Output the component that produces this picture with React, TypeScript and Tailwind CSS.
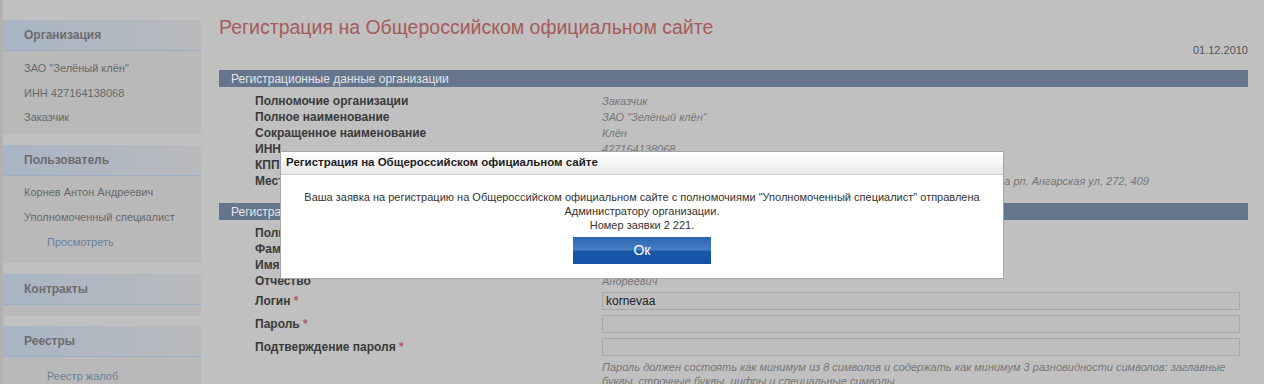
import React from 'react'

const orgRows = [
  { label: 'Полномочие организации', value: 'Заказчик' },
  { label: 'Полное наименование', value: 'ЗАО "Зелёный клён"' },
  { label: 'Сокращенное наименование', value: 'Клён' },
  { label: 'ИНН', value: '427164138068' },
  { label: 'КПП', value: '427101001' },
  {
    label: 'Место нахождения',
    value: '665830, Российская Федерация, Иркутская обл, Ангарский район, Михайловка рп, Ангарская ул, 272, 409',
  },
]

const userRows = [
  { label: 'Полномочия пользователя', value: 'Уполномоченный специалист' },
  { label: 'Фамилия', value: 'Корнев' },
  { label: 'Имя', value: 'Антон' },
  { label: 'Отчество', value: 'Андреевич' },
]

function SideHeader({ title }: { title: string }) {
  return (
    <div className="h-[31px] pl-[21px] flex items-center border-b border-[#9cafc6] bg-[linear-gradient(to_right,#a8b5c5,#b9babc)] text-[12px] font-bold text-[#6c6c6c]">
      {title}
    </div>
  )
}

function Sidebar() {
  return (
    <div className="w-[198px] shrink-0 pt-[20px] text-[11px] text-[#686868]">
      <SideHeader title="Организация" />
      <div className="bg-[#b9b9b9] pl-[21px] pt-[5px] pb-[4px] leading-[24.5px]">
        <div>ЗАО "Зелёный клён"</div>
        <div>ИНН 427164138068</div>
        <div>Заказчик</div>
      </div>

      <div className="h-[11px]" />
      <SideHeader title="Пользователь" />
      <div className="bg-[#b9b9b9] pl-[21px] pt-[4px] pb-[8px] leading-[25px]">
        <div>Корнев Антон Андреевич</div>
        <div>Уполномоченный специалист</div>
        <div className="pl-[23px] text-[#6a7e9e]">Просмотреть</div>
      </div>

      <div className="h-[11px]" />
      <SideHeader title="Контракты" />
      <div className="bg-[#b9b9b9] h-[11px]" />

      <div className="h-[10px]" />
      <SideHeader title="Реестры" />
      <div className="bg-[#b9b9b9] pl-[44px] pt-[7px] pb-[20px] leading-[24px] text-[#6a7e9e]">
        <div>Реестр жалоб</div>
      </div>
    </div>
  )
}

function Bar({ title }: { title: string }) {
  return (
    <div className="h-[17px] pl-[12px] flex items-center bg-[#65758b] text-[12px] text-[#e2e6ea]">
      {title}
    </div>
  )
}

function InfoRow({ label, value }: { label: string; value: string }) {
  return (
    <div className="flex h-[16px] items-center">
      <div className="w-[347px] shrink-0 text-[12px] font-bold text-[#3a3a3a]">{label}</div>
      <div className="text-[11px] italic text-[#777] whitespace-nowrap">{value}</div>
    </div>
  )
}

function InputRow({ label, value }: { label: string; value?: string }) {
  return (
    <div className="flex h-[23px] items-center text-[12px]">
      <div className="w-[347px] shrink-0 font-bold text-[#3a3a3a]">
        {label} <span className="text-[#b25a5a]">*</span>
      </div>
      <div className="flex-1 mr-[8px] h-[18px] border border-[#a9a9a9] bg-[#bebebe] px-[3px] flex items-center text-[#222]">
        {value}
      </div>
    </div>
  )
}

function Modal() {
  return (
    <div className="absolute left-[280px] top-[151px] w-[724px] h-[128px] bg-white border border-[#a5a5a5]">
      <div className="h-[23px] pl-[5px] flex items-center border-b border-[#cfcfcf] bg-[linear-gradient(to_bottom,#ffffff,#e9e9e9)] text-[11.5px] font-bold text-[#1e1e1e]">
        Регистрация на Общероссийском официальном сайте
      </div>
      <div className="flex flex-col items-center pt-[15px] text-[11px] leading-[14px] text-[#333] text-center">
        <div>
          Ваша заявка на регистрацию на Общероссийском официальном сайте с полномочиями "Уполномоченный специалист" отправлена
        </div>
        <div>Администратору организации.</div>
        <div>Номер заявки 2 221.</div>
        <button className="mt-[5px] w-[138px] h-[27px] leading-[27px] bg-[linear-gradient(to_bottom,#2b64b2_0%,#4a7fc5_48%,#1858a9_52%,#1452a4_100%)] text-white text-[14px]">
          Ок
        </button>
      </div>
    </div>
  )
}

export default function App() {
  return (
    <div className="relative w-[1264px] h-[384px] overflow-hidden bg-[#c0c0c0] font-['Liberation_Sans',Arial,sans-serif] flex items-start">
      <div className="w-[3px] h-full shrink-0 bg-[#b1b1b1]" />
      <Sidebar />

      <div className="ml-[18px] w-[1029px] shrink-0">
        <h1 className="pt-[14px] leading-[26px] text-[19.5px] text-[#a65b5b]">
          Регистрация на Общероссийском официальном сайте
        </h1>
        <div className="mt-[2px] leading-[16px] text-[11px] text-[#555] text-right">01.12.2010</div>

        <div className="mt-[12px]">
          <Bar title="Регистрационные данные организации" />
        </div>
        <div className="pl-[36px] pt-[6px]">
          {orgRows.map((r) => (
            <InfoRow key={r.label} label={r.label} value={r.value} />
          ))}
        </div>

        <div className="mt-[14px]">
          <Bar title="Регистрационные данные пользователя" />
        </div>
        <div className="pl-[36px] pt-[5px]">
          {userRows.map((r) => (
            <InfoRow key={r.label} label={r.label} value={r.value} />
          ))}
          <InputRow label="Логин" value="kornevaa" />
          <InputRow label="Пароль" />
          <InputRow label="Подтверждение пароля" />
          <div className="ml-[347px] mt-[2px] text-[11px] leading-[14px] italic text-[#777]">
            Пароль должен состоять как минимум из 8 символов и содержать как минимум 3 разновидности символов: заглавные
            <br />
            буквы, строчные буквы, цифры и специальные символы
          </div>
        </div>
      </div>

      <Modal />
    </div>
  )
}
